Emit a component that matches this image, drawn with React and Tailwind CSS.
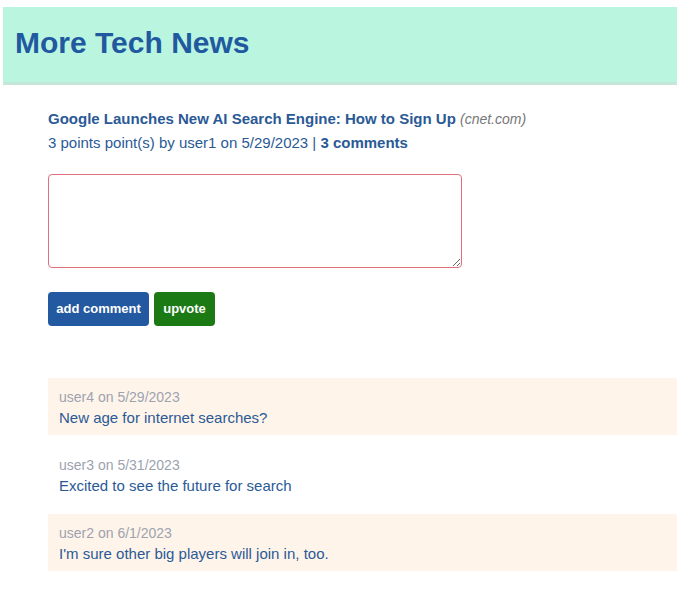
export default function App() {
  const comments = [
    { user: "user4", date: "5/29/2023", text: "New age for internet searches?", bg: "bg-[#fff4ea]" },
    { user: "user3", date: "5/31/2023", text: "Excited to see the future for search", bg: "bg-white" },
    { user: "user2", date: "6/1/2023", text: "I'm sure other big players will join in, too.", bg: "bg-[#fff4ea]" },
  ];
  return (
    <div className="min-h-[609px] bg-white pl-[3px] pt-[7px] font-['Liberation_Sans',Arial,sans-serif]">
      <header className="h-[78px] bg-[#baf5df] border-b-[3px] border-[#c5e6d9] flex items-center px-3">
        <h1 className="text-[30px] font-bold text-[#2159a0] leading-none -mt-1">More Tech News</h1>
      </header>
      <main className="pl-[45px] pt-[22px]">
        <div className="text-[15px] leading-[23px]">
          <div>
            <a className="font-bold text-[#2a5a96]">Google Launches New AI Search Engine: How to Sign Up</a>{" "}
            <span className="italic text-[#777] text-[14px]">(cnet.com)</span>
          </div>
          <div className="text-[#2a5a96]">
            3 points point(s) by user1 on 5/29/2023 | <span className="font-bold">3 comments</span>
          </div>
        </div>
        <textarea className="mt-[20px] block w-[414px] h-[94px] border border-[#e0707a] rounded-[4px] resize-y outline-none" />
        <div className="mt-6 flex gap-[5px]">
          <button className="h-[34px] w-[101px] rounded-[4px] bg-[#2359a0] text-white text-[13px] font-bold">add comment</button>
          <button className="h-[34px] w-[61px] rounded-[4px] bg-[#1b7a13] text-white text-[13px] font-bold">upvote</button>
        </div>
        <div className="mt-[52px] flex flex-col gap-[11px]">
          {comments.map((c, i) => (
            <div key={i} className={`${c.bg} h-[57px] px-[11px] pt-[9px]`}>
              <div className="text-[14px] leading-[20px] text-[#9ca3af]">{c.user} on {c.date}</div>
              <div className="text-[15px] leading-[22px] text-[#2a5a96]">{c.text}</div>
            </div>
          ))}
        </div>
      </main>
    </div>
  );
}
